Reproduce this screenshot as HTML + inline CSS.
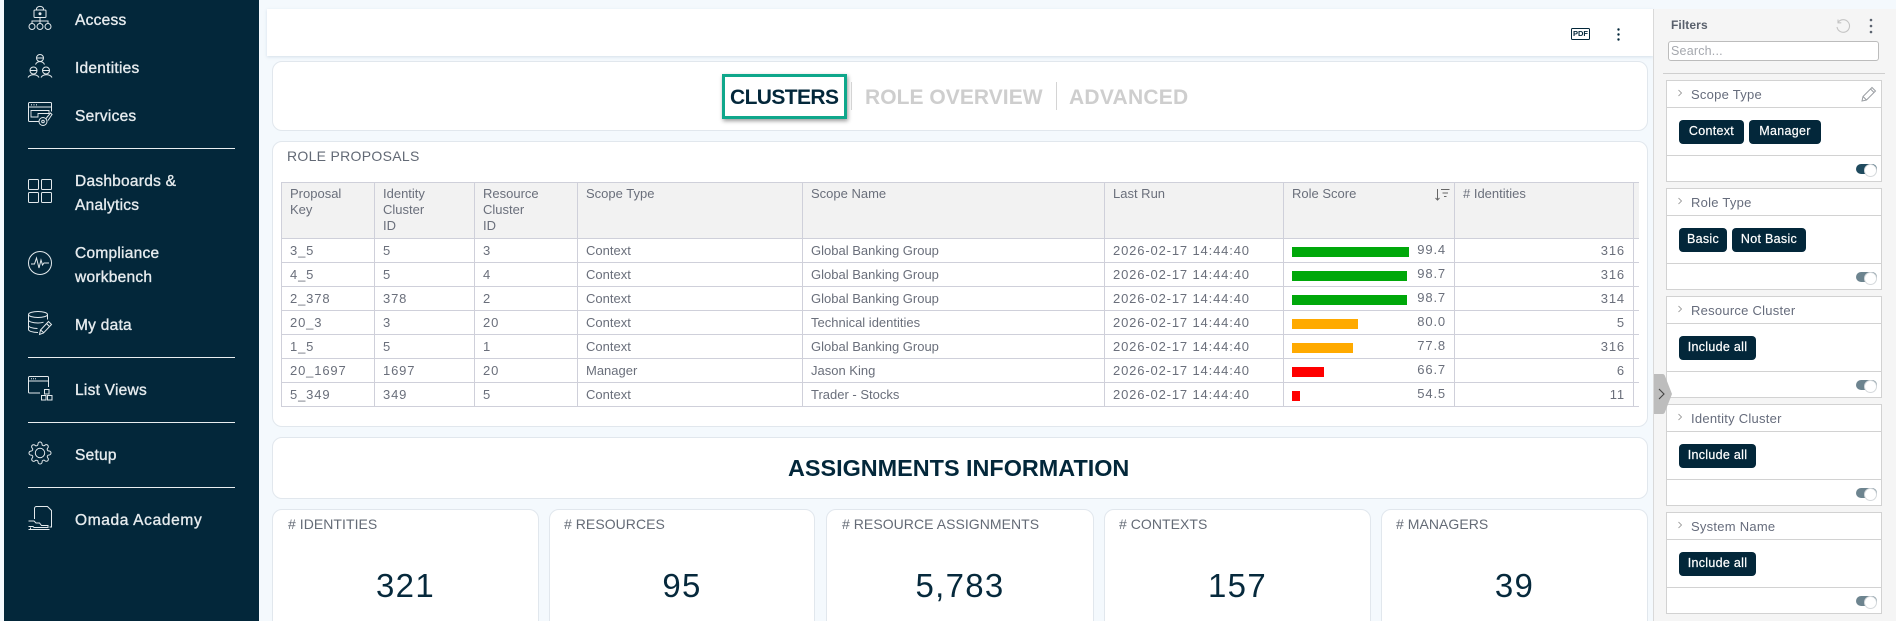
<!DOCTYPE html>
<html lang="en">
<head>
<meta charset="utf-8">
<title>Clusters</title>
<style>
*{box-sizing:border-box}
html,body{margin:0;padding:0;width:1896px;height:621px;overflow:hidden}
#root{position:relative;width:1896px;height:621px;overflow:hidden;background:#f4f9fd;font-family:"Liberation Sans",sans-serif;color:#666c78}
.a{position:absolute}
.t{position:absolute;white-space:nowrap;line-height:16px}
#side{position:absolute;left:4px;top:0;width:255px;height:621px;background:#03273a}
.nav{position:absolute;left:75px;margin-top:1px;white-space:nowrap;line-height:18px;font-size:15.5px;letter-spacing:.25px;color:#e6ebee;-webkit-text-stroke:.35px #e6ebee}
.div{position:absolute;left:28px;width:207px;height:1px;background:#e9eef0}
.ic{position:absolute;left:28px;width:24px;height:24px;overflow:visible;fill:none;stroke:#e3e9ec;stroke-width:1}
.card{position:absolute;background:#fff;border:1px solid #e1e7ed;border-radius:10px}
.tab{position:absolute;font-weight:bold;font-size:21px;line-height:24px;white-space:nowrap;top:86px}
table{border-collapse:collapse;table-layout:fixed;width:1372px;font-size:13px;color:#6a6f7b}
td,th{border:1px solid #cfd0da;padding:0 0 1px 8px;height:24px;line-height:15px;font-weight:normal;text-align:left;white-space:nowrap;overflow:hidden}
th{background:#f2f2f2;height:56px;vertical-align:top;padding-top:3px;line-height:16px;white-space:normal}
.n{letter-spacing:.85px}
.r{text-align:right;padding:0 8px 1px 0;letter-spacing:.85px}
.sc{position:relative;padding:0}
.bar{position:absolute;left:8px;top:8px;height:10px}
.val{position:absolute;right:8px;top:3px;letter-spacing:.85px}
.lab{position:absolute;font-size:14px;line-height:16px;top:516px;white-space:nowrap;letter-spacing:.05px;color:#646b76}
.num{position:absolute;font-size:33px;line-height:36px;top:568px;white-space:nowrap;letter-spacing:1.3px;color:#06293c;text-align:center}
#panel{position:absolute;left:1653px;top:9px;width:243px;height:612px;background:#f5f5f5;border-left:1px solid #d9d9d9}
.f{position:absolute;left:1666px;width:216px;height:102px;background:#fff;border:1px solid #d2d2d2}
.f i{position:absolute;left:0;right:0;height:1px;background:#d2d2d2}
.f b.ti{position:absolute;left:24px;top:6px;font-weight:normal;font-size:13px;line-height:16px;letter-spacing:.25px;color:#666c7c;white-space:nowrap}
.f svg.ch{position:absolute;left:10px;top:8px;width:6px;height:8px;fill:none;stroke:#888;stroke-width:1}
.chip{position:absolute;top:39px;height:24px;border-radius:4px;background:#03273a;color:#fff;font-size:12.5px;line-height:22px;text-align:center;white-space:nowrap;letter-spacing:.3px;-webkit-text-stroke:.2px #fff}
.tg{position:absolute;left:189px;top:83px;width:21px;height:10px;border-radius:5px;background:#6d848f}
.tg:after{content:"";position:absolute;right:0;top:-.5px;width:11px;height:11px;border-radius:50%;background:#fff;border:1px solid #d5d9dc}
</style>
</head>
<body>
<div id="root">
<div id="side"></div>

<svg class="ic" style="top:6px" viewBox="0 0 24 24"><rect x="6" y="4" width="12" height="7.5" rx="1"/><path d="M8.5 4V3a3.5 2.6 0 0 1 7 0v1"/><circle cx="12" cy="7.7" r="1" fill="#e3e9ec"/><path d="M12 11.5V15M4 18v-3h16v3M12 15v3"/><circle cx="4" cy="20.5" r="3"/><circle cx="12" cy="20.5" r="3"/><circle cx="20" cy="20.5" r="3"/></svg>
<div class="nav" style="top:11px">Access</div>

<svg class="ic" style="top:54px" viewBox="0 0 24 24"><circle cx="12" cy="4" r="3.5"/><path d="M8.5 4h7M7.5 10.5a5 5 0 0 1 9 0"/><circle cx="5.5" cy="16.5" r="3.5"/><path d="M2 16.5h7M0 23.5a6 4.5 0 0 1 11 0"/><circle cx="18" cy="16.5" r="3.5"/><path d="M14.5 16.5h7M13 23.5a6 4.5 0 0 1 11 0"/></svg>
<div class="nav" style="top:59px">Identities</div>

<svg class="ic" style="top:102px" viewBox="0 0 24 24"><path d="M11 19.5H1.5a1 1 0 0 1-1-1V1.5a1 1 0 0 1 1-1h21a1 1 0 0 1 1 1v8"/><path d="M.5 5h23" /><path d="M3 2.8h1M5.5 2.8h1M8 2.8h1" stroke-width="1.2"/><path d="M3 8.5h18v3H10v3.5h-7z" stroke-width=".9"/><circle cx="15" cy="19.5" r="4"/><circle cx="15" cy="19.5" r="1.3"/><path d="M18 16.5l4.500-5.500 1.500 1.500-4 6"/></svg>
<div class="nav" style="top:107px">Services</div>

<div class="div" style="top:148px"></div>

<svg class="ic" style="top:179px" viewBox="0 0 24 24"><rect x=".5" y=".5" width="10" height="10" rx="1"/><rect x="13.5" y=".5" width="10" height="10" rx="1"/><rect x=".5" y="13.5" width="10" height="10" rx="1"/><rect x="13.5" y="13.5" width="10" height="10" rx="1"/></svg>
<div class="nav" style="top:172px">Dashboards &amp;</div>
<div class="nav" style="top:196px">Analytics</div>

<svg class="ic" style="top:251px" viewBox="0 0 24 24"><circle cx="12" cy="12" r="11.5"/><path d="M3 13h3.500l2-6 2.500 10 2-8 1.500 5 1.500-2h5"/></svg>
<div class="nav" style="top:244px">Compliance</div>
<div class="nav" style="top:268px">workbench</div>

<svg class="ic" style="top:311px" viewBox="0 0 24 24"><ellipse cx="10" cy="3.5" rx="9.5" ry="3"/><path d="M.5 3.5v15c0 1.500 4 3 9.500 3M.5 9c0 1.500 4 3 9.500 3 2 0 4-.3 5.500-.8M.5 14.5c0 1.500 4 3 9 3M19.5 3.5v5"/><path d="M11.5 23.5l1-4.500 8-8.500 3 3-8 8.500zM12.5 19l3 2.500M18.5 12.5l3 3"/></svg>
<div class="nav" style="top:316px">My data</div>

<div class="div" style="top:357px"></div>

<svg class="ic" style="top:376px" viewBox="0 0 24 24"><path d="M12 17H1.5a1 1 0 0 1-1-1V1.5a1 1 0 0 1 1-1h18a1 1 0 0 1 1 1V11M.5 5h20"/><path d="M3 2.8h1M5 2.8h1M7 2.8h1" stroke-width="1"/><rect x="16.5" y="13.5" width="4.5" height="4.5"/><rect x="13.5" y="19.5" width="4.5" height="4.5"/><rect x="19.5" y="19.5" width="4.5" height="4.5"/></svg>
<div class="nav" style="top:381px">List Views</div>

<div class="div" style="top:422px"></div>

<svg class="ic" style="top:441px" viewBox="0 0 24 24"><circle cx="12" cy="12" r="4.7"/><path d="M19.4 15a1.65 1.65 0 0 0 .33 1.82l.06.06a2 2 0 0 1 0 2.83 2 2 0 0 1-2.83 0l-.06-.06a1.65 1.65 0 0 0-1.82-.33 1.65 1.65 0 0 0-1 1.51V21a2 2 0 0 1-2 2 2 2 0 0 1-2-2v-.09A1.65 1.65 0 0 0 9 19.4a1.65 1.65 0 0 0-1.82.33l-.06.06a2 2 0 0 1-2.83 0 2 2 0 0 1 0-2.83l.06-.06a1.65 1.65 0 0 0 .33-1.82 1.65 1.65 0 0 0-1.51-1H3a2 2 0 0 1-2-2 2 2 0 0 1 2-2h.09A1.65 1.65 0 0 0 4.6 9a1.65 1.65 0 0 0-.33-1.82l-.06-.06a2 2 0 0 1 0-2.83 2 2 0 0 1 2.83 0l.06.06a1.65 1.65 0 0 0 1.82.33H9a1.65 1.65 0 0 0 1-1.51V3a2 2 0 0 1 2-2 2 2 0 0 1 2 2v.09a1.65 1.65 0 0 0 1 1.51 1.65 1.65 0 0 0 1.82-.33l.06-.06a2 2 0 0 1 2.83 0 2 2 0 0 1 0 2.83l-.06.06a1.65 1.65 0 0 0-.33 1.82V9a1.65 1.65 0 0 0 1.51 1H21a2 2 0 0 1 2 2 2 2 0 0 1-2 2h-.09a1.65 1.65 0 0 0-1.51 1z"/></svg>
<div class="nav" style="top:446px">Setup</div>

<div class="div" style="top:487px"></div>

<svg class="ic" style="top:506px" viewBox="0 0 24 24"><path d="M6.5 13V2.5a2 2 0 0 1 2-2h11l4 4V21h-2"/><path d="M.5 15h5.500l2 2h3.500l2 2.500h6.500v2h-14l-1-1H.5M.5 23.5h21M2.5 21.5v2"/></svg>
<div class="nav" style="top:511px;letter-spacing:.65px">Omada Academy</div>

<!-- toolbar -->
<div class="a" style="left:267px;top:9px;width:1386px;height:47px;background:#fff;box-shadow:0 1px 3px rgba(120,150,175,.25)"></div>
<div class="a" style="left:1571px;top:28px;width:19px;height:12px;border:1px solid #03273a;border-radius:1.5px;font-size:7.5px;line-height:10px;text-align:center;color:#03273a;font-weight:bold">PDF</div>
<svg class="a" style="left:1616px;top:27px" width="5" height="14"><circle cx="2.5" cy="2.5" r="1.2" fill="#03273a"/><circle cx="2.5" cy="7.5" r="1.2" fill="#03273a"/><circle cx="2.5" cy="12.5" r="1.2" fill="#03273a"/></svg>

<!-- tabs card -->
<div class="card" style="left:272px;top:61px;width:1376px;height:70px"></div>
<div class="a" style="left:722px;top:74px;width:125px;height:45px;border:3px solid #0fa78b;box-shadow:1px 2px 4px rgba(0,0,0,.4);background:#fff"></div>
<div class="tab" style="left:730px;color:#03273a;letter-spacing:-.6px">CLUSTERS</div>
<div class="a" style="left:851px;top:82px;width:1px;height:28px;background:#d4d4d4"></div>
<div class="tab" style="left:865px;color:#cecece;letter-spacing:.05px">ROLE OVERVIEW</div>
<div class="a" style="left:1056px;top:82px;width:1px;height:28px;background:#d4d4d4"></div>
<div class="tab" style="left:1069px;color:#cecece;letter-spacing:.25px">ADVANCED</div>

<!-- role proposals -->
<div class="card" style="left:272px;top:141px;width:1376px;height:286px"></div>
<div class="t" style="left:287px;top:148px;font-size:14px;letter-spacing:.3px;color:#626975">ROLE PROPOSALS</div>
<div class="a" style="left:281px;top:182px;width:1358px;height:226px;overflow:hidden">
<table>
<colgroup><col style="width:93px"><col style="width:100px"><col style="width:103px"><col style="width:225px"><col style="width:302px"><col style="width:179px"><col style="width:171px"><col style="width:179px"><col style="width:20px"></colgroup>
<tr><th>Proposal<br>Key</th><th>Identity<br>Cluster<br>ID</th><th>Resource<br>Cluster<br>ID</th><th>Scope Type</th><th>Scope Name</th><th>Last Run</th><th>Role Score</th><th># Identities</th><th></th></tr>
<tr><td class="n">3_5</td><td class="n">5</td><td class="n">3</td><td>Context</td><td>Global Banking Group</td><td class="n">2026-02-17 14:44:40</td><td class="sc"><div class="bar" style="width:117px;background:#00a80a"></div><div class="val">99.4</div></td><td class="r">316</td><td></td></tr>
<tr><td class="n">4_5</td><td class="n">5</td><td class="n">4</td><td>Context</td><td>Global Banking Group</td><td class="n">2026-02-17 14:44:40</td><td class="sc"><div class="bar" style="width:115px;background:#00a80a"></div><div class="val">98.7</div></td><td class="r">316</td><td></td></tr>
<tr><td class="n">2_378</td><td class="n">378</td><td class="n">2</td><td>Context</td><td>Global Banking Group</td><td class="n">2026-02-17 14:44:40</td><td class="sc"><div class="bar" style="width:115px;background:#00a80a"></div><div class="val">98.7</div></td><td class="r">314</td><td></td></tr>
<tr><td class="n">20_3</td><td class="n">3</td><td class="n">20</td><td>Context</td><td>Technical identities</td><td class="n">2026-02-17 14:44:40</td><td class="sc"><div class="bar" style="width:66px;background:#ffaa00"></div><div class="val">80.0</div></td><td class="r">5</td><td></td></tr>
<tr><td class="n">1_5</td><td class="n">5</td><td class="n">1</td><td>Context</td><td>Global Banking Group</td><td class="n">2026-02-17 14:44:40</td><td class="sc"><div class="bar" style="width:61px;background:#ffaa00"></div><div class="val">77.8</div></td><td class="r">316</td><td></td></tr>
<tr><td class="n">20_1697</td><td class="n">1697</td><td class="n">20</td><td>Manager</td><td>Jason King</td><td class="n">2026-02-17 14:44:40</td><td class="sc"><div class="bar" style="width:32px;background:#ff0000"></div><div class="val">66.7</div></td><td class="r">6</td><td></td></tr>
<tr><td class="n">5_349</td><td class="n">349</td><td class="n">5</td><td>Context</td><td>Trader - Stocks</td><td class="n">2026-02-17 14:44:40</td><td class="sc"><div class="bar" style="width:8px;background:#ff0000"></div><div class="val">54.5</div></td><td class="r">11</td><td></td></tr>
</table>
</div>
<svg class="a" style="left:1435px;top:188px;fill:none;stroke:#666" width="15" height="13" stroke-width="1"><path d="M2.5 1v11M.5 10l2 2 2-2M6 1.5h8.500M7.5 5h5.500M9 8.5h2.500"/></svg>

<!-- assignments -->
<div class="card" style="left:272px;top:437px;width:1376px;height:62px"></div>
<div class="t" style="left:788px;top:454px;line-height:28px;font-size:23.4px;font-weight:bold;color:#03273a">ASSIGNMENTS INFORMATION</div>

<div class="card" style="left:272px;top:509px;width:267px;height:130px"></div>
<div class="card" style="left:549px;top:509px;width:266px;height:130px"></div>
<div class="card" style="left:826px;top:509px;width:268px;height:130px"></div>
<div class="card" style="left:1104px;top:509px;width:267px;height:130px"></div>
<div class="card" style="left:1381px;top:509px;width:267px;height:130px"></div>
<div class="lab" style="left:288px">#&nbsp;IDENTITIES</div>
<div class="lab" style="left:564px">#&nbsp;RESOURCES</div>
<div class="lab" style="left:842px">#&nbsp;RESOURCE ASSIGNMENTS</div>
<div class="lab" style="left:1119px">#&nbsp;CONTEXTS</div>
<div class="lab" style="left:1396px">#&nbsp;MANAGERS</div>
<div class="num" style="left:272px;width:267px">321</div>
<div class="num" style="left:549px;width:266px">95</div>
<div class="num" style="left:826px;width:268px">5,783</div>
<div class="num" style="left:1104px;width:267px">157</div>
<div class="num" style="left:1381px;width:267px">39</div>

<!-- filters panel -->
<div id="panel"></div>
<div class="t" style="left:1671px;top:17px;font-size:12px;font-weight:bold;letter-spacing:.1px;color:#59606c">Filters</div>
<svg class="a" style="left:1835px;top:18px;fill:none;stroke:#c4c4c4;stroke-width:1.1" width="16" height="16"><path d="M3 4.5A6.3 6.3 0 1 1 2 9"/><path d="M3 1.5v3.3h3.3"/></svg>
<svg class="a" style="left:1868px;top:18px" width="6" height="16"><circle cx="3" cy="2" r="1.3" fill="#5c6470"/><circle cx="3" cy="8" r="1.3" fill="#5c6470"/><circle cx="3" cy="14" r="1.3" fill="#5c6470"/></svg>
<div class="a" style="left:1668px;top:41px;width:211px;height:20px;background:#fff;border:1px solid #bcbcbc;border-radius:3px"></div>
<div class="t" style="left:1671px;top:43px;font-size:12.5px;letter-spacing:.2px;color:#a5a8ae">Search...</div>
<div class="a" style="left:1663px;top:73px;width:222px;height:1px;background:#cfcfcf"></div>

<div class="f" style="top:80px"><i style="top:26px"></i><i style="top:74px"></i>
<svg class="ch" viewBox="0 0 8 10"><path d="M2 1l4 4-4 4"/></svg><b class="ti">Scope Type</b>
<svg class="a" style="left:194px;top:5px;fill:none;stroke:#9a9ea3" width="16" height="16" stroke-width="1"><path d="M1 15l1-4.5L11 1.5l3.5 3.5-9 9zM9.5 3l3.5 3.5M2 10.5l3.5 3.5"/></svg>
<div class="chip" style="left:12px;width:65px">Context</div><div class="chip" style="left:82px;width:72px">Manager</div>
<div class="tg" style="background:#1f4a5e"></div></div>

<div class="f" style="top:188px"><i style="top:26px"></i><i style="top:74px"></i>
<svg class="ch" viewBox="0 0 8 10"><path d="M2 1l4 4-4 4"/></svg><b class="ti">Role Type</b>
<div class="chip" style="left:12px;width:48px">Basic</div><div class="chip" style="left:65px;width:74px">Not Basic</div>
<div class="tg"></div></div>

<div class="f" style="top:296px"><i style="top:26px"></i><i style="top:74px"></i>
<svg class="ch" viewBox="0 0 8 10"><path d="M2 1l4 4-4 4"/></svg><b class="ti">Resource Cluster</b>
<div class="chip" style="left:12px;width:77px">Include all</div>
<div class="tg"></div></div>

<div class="f" style="top:404px"><i style="top:26px"></i><i style="top:74px"></i>
<svg class="ch" viewBox="0 0 8 10"><path d="M2 1l4 4-4 4"/></svg><b class="ti">Identity Cluster</b>
<div class="chip" style="left:12px;width:77px">Include all</div>
<div class="tg"></div></div>

<div class="f" style="top:512px"><i style="top:26px"></i><i style="top:74px"></i>
<svg class="ch" viewBox="0 0 8 10"><path d="M2 1l4 4-4 4"/></svg><b class="ti">System Name</b>
<div class="chip" style="left:12px;width:77px">Include all</div>
<div class="tg"></div></div>

<svg class="a" style="left:1654px;top:374px" width="19" height="40"><path d="M0 0h8a3 3 0 0 1 3 2l7 18-7 18a3 3 0 0 1-3 2H0z" fill="#bdbdbd"/><path d="M5 15l5 5-5 5" fill="none" stroke="#444" stroke-width="1.1"/></svg>
</div>
</body>
</html>
